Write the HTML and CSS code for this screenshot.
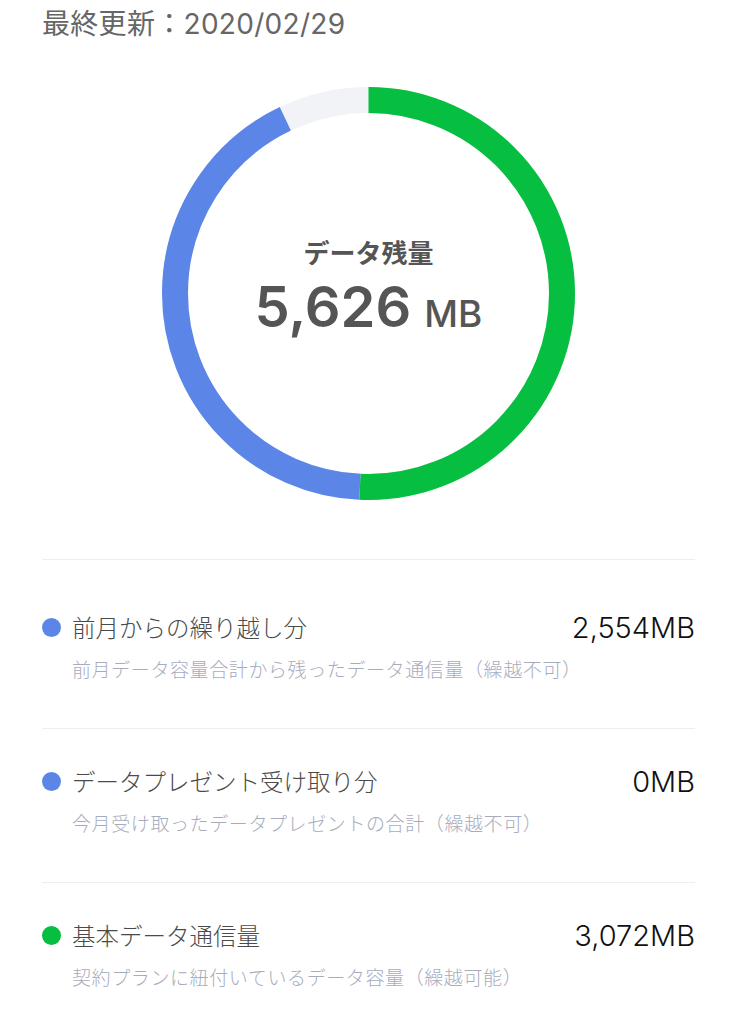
FILE: index.html
```html
<!DOCTYPE html>
<html lang="ja">
<head>
  <meta charset="UTF-8" />
  <title>データ残量</title>
  <link rel="stylesheet" href="styles.css">
</head>
<body>

  <p class="updated">最終更新：2020/02/29</p>

  <!-- 残量グラフ -->
  <div class="chart">
    <div class="ring">
      <svg class="ring-svg" viewBox="0 0 413 413" width="413" height="413">
        <circle class="track" cx="206.5" cy="206.5" r="193.5" />
        <circle class="seg seg-basic" cx="206.5" cy="206.5" r="193.5"
                stroke-dasharray="616.3 1215.8" />
        <circle class="seg seg-carry" cx="206.5" cy="206.5" r="193.5"
                stroke-dasharray="513 1215.8" stroke-dashoffset="-616.3" />
      </svg>
      <div class="ring-label">
        <div class="ring-title">データ残量</div>
        <div class="ring-amount">5,626<span class="unit">MB</span></div>
      </div>
    </div>
  </div>

  <ul class="breakdown">
    <li class="item">
      <div class="item-head">
        <span class="dot dot-blue"></span>
        <span class="item-name">前月からの繰り越し分</span>
        <span class="item-value">2,554MB</span>
      </div>
      <p class="item-note">前月データ容量合計から残ったデータ通信量（繰越不可）</p>
    </li>
    <li class="item">
      <div class="item-head">
        <span class="dot dot-blue"></span>
        <span class="item-name">データプレゼント受け取り分</span>
        <span class="item-value">0MB</span>
      </div>
      <p class="item-note">今月受け取ったデータプレゼントの合計（繰越不可）</p>
    </li>
    <li class="item">
      <div class="item-head">
        <span class="dot dot-green"></span>
        <span class="item-name">基本データ通信量</span>
        <span class="item-value">3,072MB</span>
      </div>
      <p class="item-note">契約プランに紐付いているデータ容量（繰越可能）</p>
    </li>
  </ul>

</body>
</html>
```

FILE: styles.css
```css
body {
  margin: 0;
  padding: 0 42px;
  background: #fff;
  font-family: Inter, "Noto Sans CJK JP", sans-serif;
  color: #4a4a4a;
}

/* 最終更新 */
.updated {
  margin: 0;
  padding-top: 4px;
  font-size: 28px;
  line-height: 40px;
  letter-spacing: 0.3px;
  color: #666;
}

/* グラフ部分 */
.chart {
  display: flex;
  justify-content: center;
  margin-top: 43px;
  padding-bottom: 59px;
  border-bottom: 1px solid #eceef3;
}

.ring {
  display: grid;
  width: 413px;
  height: 413px;
}

.ring-svg,
.ring-label {
  grid-area: 1 / 1;
}

.ring-svg {
  transform: rotate(-90deg);
}

.ring-svg circle {
  fill: none;
  stroke-width: 26;
}

.track { stroke: #f2f3f7; }
.seg-basic { stroke: #06be3f; }
.seg-carry { stroke: #5b86e8; }

.ring-label {
  display: flex;
  flex-direction: column;
  align-items: center;
  justify-content: center;
  padding-bottom: 6px;
  color: #555;
}

.ring-title {
  font-size: 26px;
  line-height: 32px;
  font-weight: 700;
}

.ring-amount {
  margin-top: 7px;
  font-size: 56px;
  line-height: 60px;
  font-weight: 600;
}

.ring-amount .unit {
  margin-left: 13px;
  font-size: 37px;
  font-weight: 500;
}

/* 内訳 */
.breakdown {
  list-style: none;
  margin: 15px 0 0;
  padding: 0;
}

.item {
  padding: 37px 0 44px;
}

.item + .item {
  border-top: 1px solid #eceef3;
}

.item-head {
  display: flex;
  align-items: center;
  height: 30px;
}

.dot {
  width: 19px;
  height: 19px;
  border-radius: 50%;
  margin-right: 11px;
  flex-shrink: 0;
}

.dot-blue { background: #5b86e8; }
.dot-green { background: #06be3f; }

.item-name {
  flex: 1;
  font-size: 23.5px;
  font-weight: 300;
  color: #4a4a4a;
}

.item-value {
  font-size: 29px;
  font-weight: 300;
  color: #111;
}

.item-note {
  margin: 16px 0 0 30px;
  font-size: 19px;
  line-height: 26px;
  letter-spacing: 0.6px;
  font-weight: 300;
  color: #a7acbd;
}
```
